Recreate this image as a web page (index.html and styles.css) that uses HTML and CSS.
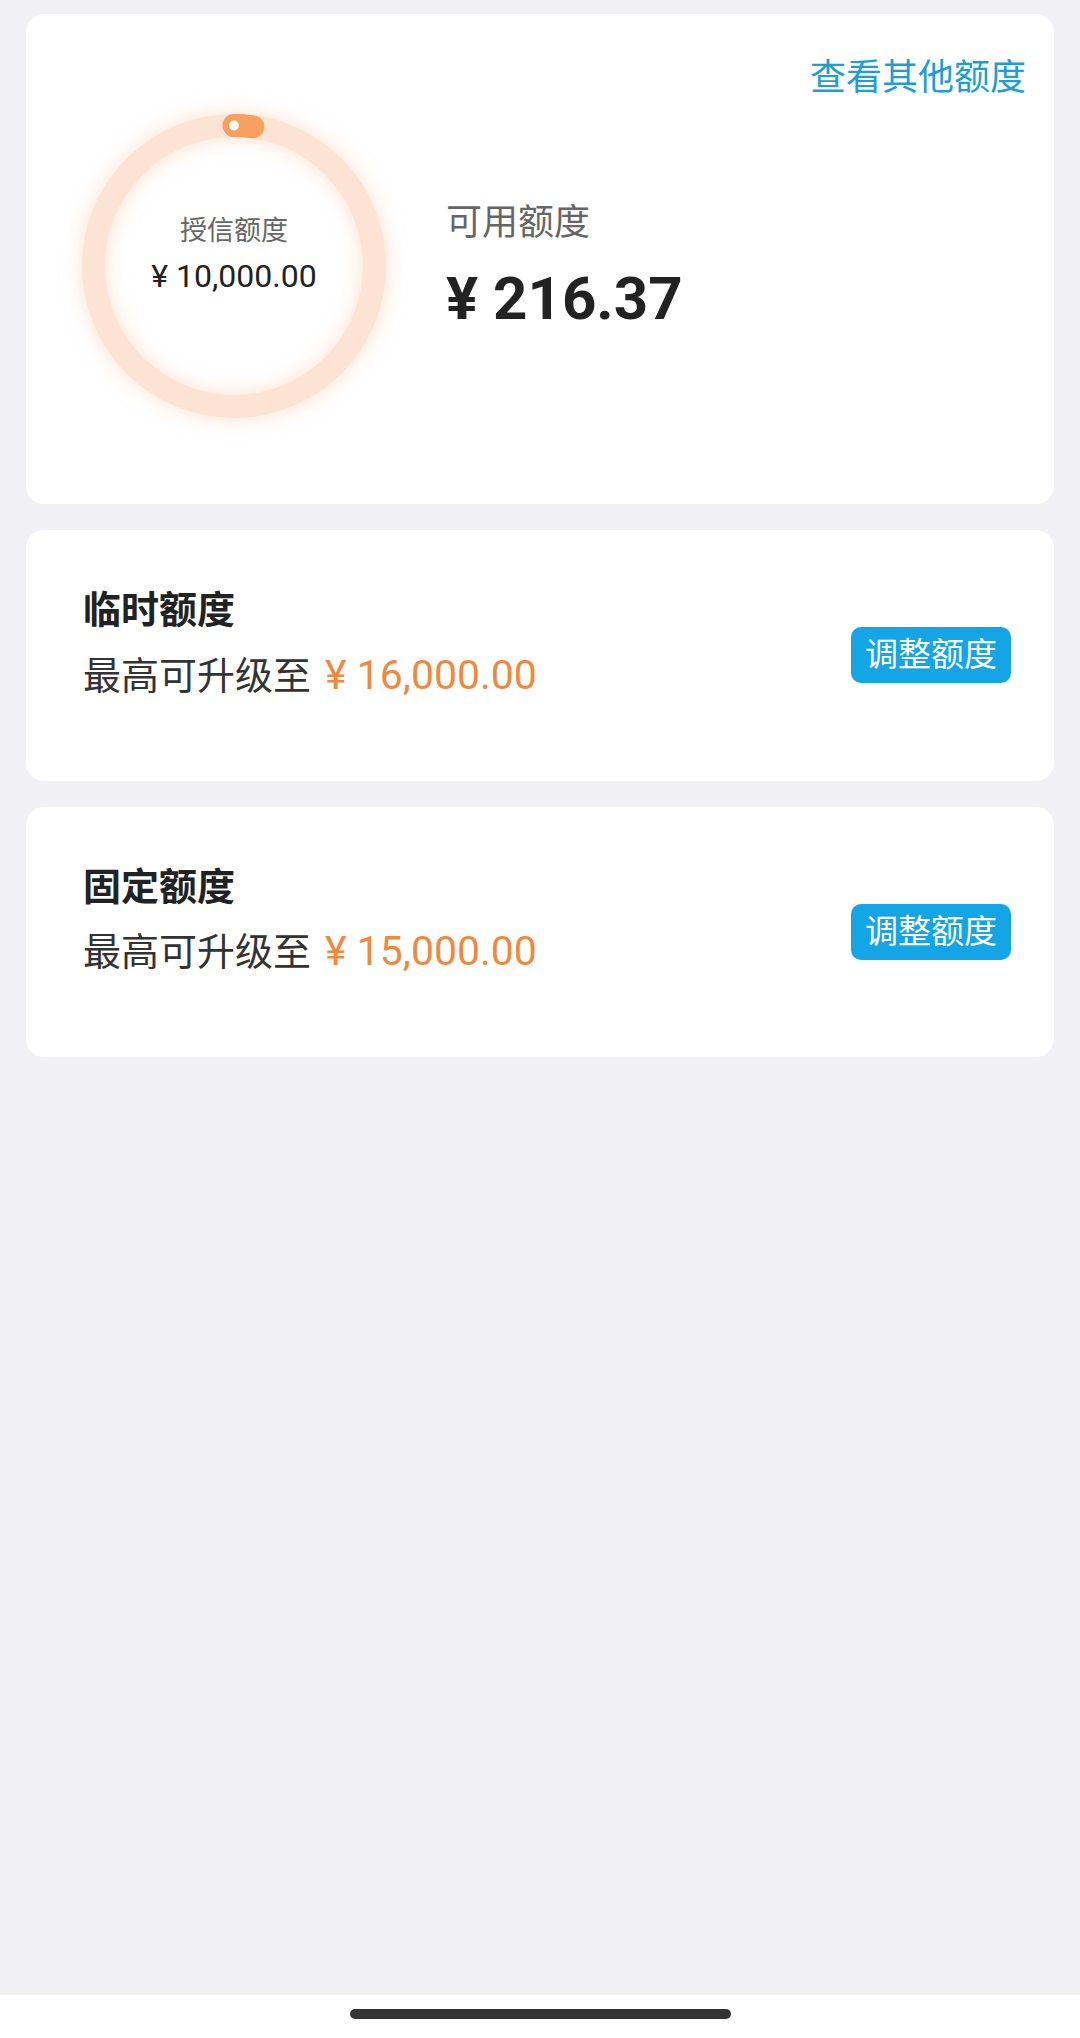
FILE: index.html
```html
<!DOCTYPE html>
<html lang="zh-CN">

<head>
    <meta charset="UTF-8">
    <meta name="viewport" content="width=device-width, initial-scale=1.0">
    <title>我的额度</title>
    <link rel="stylesheet" href="styles.css">
</head>

<body>
    <main class="page">
        <!-- Overview Card -->
        <section class="card overview">
            <div class="overview-head">
                <a class="other-link" href="#">查看其他额度</a>
            </div>
            <div class="overview-body">
                <div class="ring">
                    <svg class="ring-svg" viewBox="0 0 304 304" width="304" height="304">
                        <circle cx="152" cy="152" r="140.5" fill="none" stroke="#fde3d4" stroke-width="23" />
                        <!-- used / total = 216.37 / 10000 -->
                        <circle cx="152" cy="152" r="140.5" fill="none" stroke="#f8a062" stroke-width="23"
                            stroke-linecap="round" stroke-dasharray="19 900" transform="rotate(-90 152 152)" />
                        <circle cx="152" cy="11.5" r="5" fill="#ffffff" />
                    </svg>
                    <div class="ring-text">
                        <div class="ring-label">授信额度</div>
                        <div class="ring-amount">¥ 10,000.00</div>
                    </div>
                </div>
                <div class="available">
                    <div class="available-label">可用额度</div>
                    <div class="available-amount">¥ 216.37</div>
                </div>
            </div>
        </section>

        <!-- Temporary Limit -->
        <section class="card limit">
            <div class="limit-info">
                <div class="limit-title">临时额度</div>
                <div class="limit-sub">最高可升级至<span class="limit-amount">¥ 16,000.00</span></div>
            </div>
            <button class="adjust-btn">调整额度</button>
        </section>

        <!-- Fixed Limit -->
        <section class="card limit">
            <div class="limit-info">
                <div class="limit-title">固定额度</div>
                <div class="limit-sub">最高可升级至<span class="limit-amount">¥ 15,000.00</span></div>
            </div>
            <button class="adjust-btn">调整额度</button>
        </section>
    </main>

    <footer class="home-bar">
        <div class="home-indicator"></div>
    </footer>
</body>

</html>
```

FILE: styles.css
```css
* {
    box-sizing: border-box;
}

body {
    font-family: Roboto, 'Noto Sans CJK SC', sans-serif;
    background-color: #f0f0f5;
    color: #222222;
    margin: 0;
    padding: 0;
    display: flex;
    flex-direction: column;
    min-height: 100vh;
}

.page {
    flex: 1;
    padding: 14px 26px;
    display: flex;
    flex-direction: column;
    gap: 26px;
}

.card {
    background-color: #ffffff;
    border-radius: 18px;
}

/* Overview */
.overview {
    padding: 43px 28px 86px 56px;
}

.overview-head {
    display: flex;
    justify-content: flex-end;
    margin-bottom: 14px;
}

.other-link {
    color: #1a9fd8;
    font-size: 36px;
    line-height: 1.2;
    text-decoration: none;
}

.overview-body {
    display: flex;
    align-items: center;
    gap: 60px;
}

.ring {
    display: grid;
    width: 304px;
    height: 304px;
    flex-shrink: 0;
}

.ring-svg,
.ring-text {
    grid-area: 1 / 1;
}

.ring-svg {
    overflow: visible;
    filter: drop-shadow(0 0 10px rgba(252, 196, 160, 0.55));
}

.ring-text {
    display: flex;
    flex-direction: column;
    align-items: center;
    justify-content: center;
    padding-bottom: 22px;
}

.ring-label {
    font-size: 27px;
    line-height: 1.2;
    color: #666666;
    margin-bottom: 10px;
}

.ring-amount {
    font-size: 32px;
    line-height: 1.2;
    color: #222222;
}

.available {
    padding-top: 4px;
}

.available-label {
    font-size: 36px;
    line-height: 1.2;
    color: #666666;
    margin-bottom: 18px;
}

.available-amount {
    font-size: 60px;
    line-height: 72px;
    font-weight: bold;
    color: #222222;
}

/* Limit cards */
.limit {
    display: flex;
    align-items: center;
    justify-content: space-between;
    padding: 0 43px 0 57px;
}

.limit-info {
    padding: 58px 0 82px;
}

.limit-title {
    font-size: 38px;
    line-height: 1.2;
    font-weight: bold;
    color: #222222;
    margin-bottom: 19px;
}

.limit-sub {
    font-size: 38px;
    line-height: 45px;
    color: #333333;
}

.limit-amount {
    color: #f0893e;
    font-size: 41px;
    margin-left: 14px;
}

.adjust-btn {
    font-family: inherit;
    background-color: #13a5e6;
    color: #ffffff;
    border: none;
    height: 56px;
    padding: 0 14px;
    border-radius: 10px;
    font-size: 33px;
    line-height: 56px;
    cursor: pointer;
}

/* Bottom bar */
.home-bar {
    height: 43px;
    background-color: #ffffff;
    display: flex;
    justify-content: center;
    padding-top: 14px;
}

.home-indicator {
    width: 381px;
    height: 10px;
    border-radius: 5px;
    background-color: #333333;
}
```
